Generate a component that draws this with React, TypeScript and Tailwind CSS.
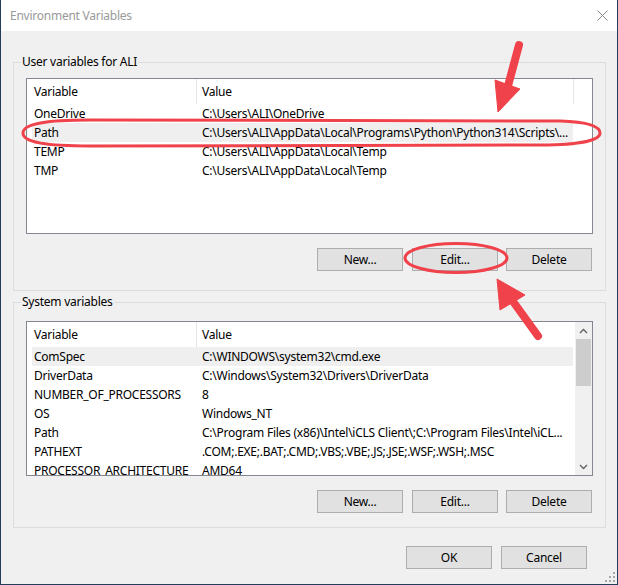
import React from "react";

const FONT = "font-['Noto_Sans',sans-serif] tracking-[-0.25px]";

function Btn({ label, className = "" }: { label: string; className?: string }) {
  return (
    <div
      className={`w-[86px] h-[23px] border border-[#adadad] bg-[#e1e1e1] flex items-center justify-center text-[12px] text-black shrink-0 ${className}`}
    >
      {label}
    </div>
  );
}

type Row = [string, string];

const userRows: Row[] = [
  ["OneDrive", "C:\\Users\\ALI\\OneDrive"],
  ["Path", "C:\\Users\\ALI\\AppData\\Local\\Programs\\Python\\Python314\\Scripts\\..."],
  ["TEMP", "C:\\Users\\ALI\\AppData\\Local\\Temp"],
  ["TMP", "C:\\Users\\ALI\\AppData\\Local\\Temp"],
];

const sysRows: Row[] = [
  ["ComSpec", "C:\\WINDOWS\\system32\\cmd.exe"],
  ["DriverData", "C:\\Windows\\System32\\Drivers\\DriverData"],
  ["NUMBER_OF_PROCESSORS", "8"],
  ["OS", "Windows_NT"],
  ["Path", "C:\\Program Files (x86)\\Intel\\iCLS Client\\;C:\\Program Files\\Intel\\iCL..."],
  ["PATHEXT", ".COM;.EXE;.BAT;.CMD;.VBS;.VBE;.JS;.JSE;.WSF;.WSH;.MSC"],
  ["PROCESSOR_ARCHITECTURE", "AMD64"],
];

function Header({ second }: { second: boolean }) {
  return (
    <div className="h-[25px] flex shrink-0 text-[12px] text-black">
      <div className="w-[169px] shrink-0 pl-[7px] flex items-center">Variable</div>
      <div className="w-px h-full shrink-0 bg-[#e5e5e5]" />
      <div className="w-[376px] shrink-0 pl-[5px] flex items-center">Value</div>
      {second && <div className="w-px h-full shrink-0 bg-[#e5e5e5]" />}
    </div>
  );
}

function Rows({ rows, selected }: { rows: Row[]; selected: number }) {
  return (
    <>
      {rows.map(([k, v], i) => (
        <div
          key={k + i}
          className={`h-[19px] shrink-0 ml-[5px] w-[541px] flex items-center text-[12px] text-black whitespace-nowrap overflow-hidden ${
            i === selected ? "bg-[#efefef]" : ""
          }`}
        >
          <div className="w-[170px] shrink-0 pl-[2px]">{k}</div>
          <div className="shrink-0">{v}</div>
        </div>
      ))}
    </>
  );
}

function Chevron({ up }: { up: boolean }) {
  return (
    <svg width="9" height="6" viewBox="0 0 9 6">
      <path
        d={up ? "M1 5 L4.5 1.5 L8 5" : "M1 1 L4.5 4.5 L8 1"}
        stroke="#606060"
        strokeWidth="1.3"
        fill="none"
      />
    </svg>
  );
}

export default function App() {
  return (
    <div className={`relative w-[618px] h-[585px] bg-[#243b5a] pl-[1px] overflow-hidden ${FONT}`}>
      <div className="w-[616px] h-[584px] bg-[#f0f0f0] flex flex-col">
        {/* title bar */}
        <div className="h-[31px] bg-white flex items-center justify-between shrink-0">
          <span className="pl-[9px] text-[12px] text-[#999999]">Environment Variables</span>
          <svg width="11" height="11" viewBox="0 0 11 11" className="mr-[9px]">
            <path d="M0.5 0.5 L10.5 10.5 M10.5 0.5 L0.5 10.5" stroke="#8a8a8a" strokeWidth="1" />
          </svg>
        </div>

        {/* user variables group */}
        <div className="relative mt-[31px] ml-[12px] w-[593px] h-[229px] border border-[#dcdcdc] shrink-0 pt-[15px] pl-[12px] flex flex-col">
          <span className="absolute left-[7px] top-[-9px] px-[1px] bg-[#f0f0f0] text-[12px] leading-[16px] text-black">
            User variables for ALI
          </span>
          <div className="w-[567px] h-[156px] border border-[#828790] bg-white flex flex-col overflow-hidden">
            <Header second />
            <Rows rows={userRows} selected={1} />
          </div>
          <div className="flex mt-[14px] w-[567px] justify-end">
            <Btn label="New..." />
            <Btn label="Edit..." className="ml-[9px]" />
            <Btn label="Delete" className="ml-[8px] mr-[1px]" />
          </div>
        </div>

        {/* system variables group */}
        <div className="relative mt-[11px] ml-[12px] w-[593px] h-[226px] border border-[#dcdcdc] shrink-0 pt-[18px] pl-[12px] flex flex-col">
          <span className="absolute left-[7px] top-[-9px] px-[1px] bg-[#f0f0f0] text-[12px] leading-[16px] text-black">
            System variables
          </span>
          <div className="w-[567px] h-[155px] border border-[#828790] bg-white flex overflow-hidden">
            <div className="w-[548px] shrink-0 flex flex-col overflow-hidden">
              <Header second={false} />
              <Rows rows={sysRows} selected={0} />
            </div>
            <div className="w-[17px] h-full shrink-0 bg-[#f0f0f0] flex flex-col items-center">
              <div className="h-[17px] w-full flex items-center justify-center">
                <Chevron up />
              </div>
              <div className="w-[15px] h-[47px] bg-[#cdcdcd]" />
              <div className="flex-1" />
              <div className="h-[17px] w-full flex items-center justify-center">
                <Chevron up={false} />
              </div>
            </div>
          </div>
          <div className="flex mt-[14px] w-[567px] justify-end">
            <Btn label="New..." />
            <Btn label="Edit..." className="ml-[9px]" />
            <Btn label="Delete" className="ml-[8px] mr-[1px]" />
          </div>
        </div>

        {/* OK / Cancel */}
        <div className="flex justify-end mt-[18px] pr-[30px]">
          <Btn label="OK" />
          <Btn label="Cancel" className="ml-[9px]" />
        </div>

        <div className="flex-1 flex items-end justify-end pr-[1px] pb-[1px]">
          <svg width="11" height="11" viewBox="0 0 11 11">
            <rect x="8" y="0" width="2" height="2" fill="#a8a8a8" />
            <rect x="4" y="4" width="2" height="2" fill="#a8a8a8" />
            <rect x="8" y="4" width="2" height="2" fill="#a8a8a8" />
            <rect x="0" y="8" width="2" height="2" fill="#a8a8a8" />
            <rect x="4" y="8" width="2" height="2" fill="#a8a8a8" />
            <rect x="8" y="8" width="2" height="2" fill="#a8a8a8" />
          </svg>
        </div>
      </div>

      {/* red annotations */}
      <svg
        className="absolute left-0 top-0 pointer-events-none"
        width="618"
        height="585"
        viewBox="0 0 618 585"
      >
        <g fill="none" stroke="#f0424a" strokeWidth="3">
          <path d="M23 133 C23 124 44 120 90 120 L560 121 C590 122 600 127 600 133 C600 139 586 145 540 145 L90 146 C44 146 23 142 23 133 Z" />
          <ellipse cx="456" cy="258" rx="51" ry="14.5" />
        </g>
        <g fill="#f0424a" stroke="#f0424a" strokeLinejoin="round">
          <line x1="519" y1="45" x2="508" y2="86" strokeWidth="8" strokeLinecap="round" />
          <polygon points="498,112 495,80 520,89" strokeWidth="1" />
          <line x1="538" y1="336" x2="512" y2="300" strokeWidth="8" strokeLinecap="round" />
          <polygon points="497,279 500,310 525,295" strokeWidth="1" />
        </g>
      </svg>
    </div>
  );
}
